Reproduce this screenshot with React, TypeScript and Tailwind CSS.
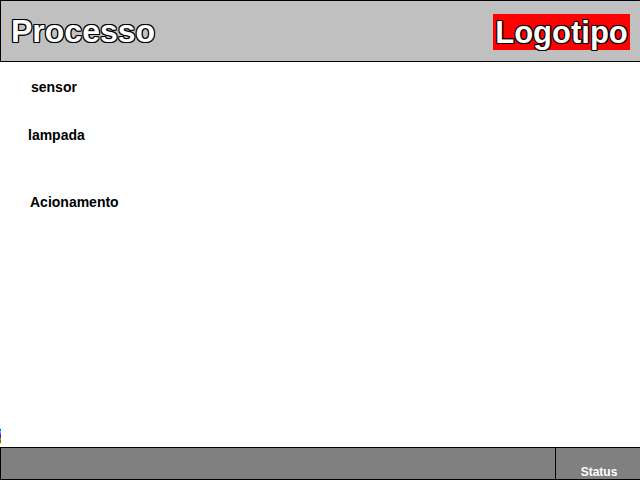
export default function App() {
  return (
    <div className="relative w-[640px] h-[480px] flex flex-col bg-white font-['Liberation_Sans',Arial,sans-serif] overflow-hidden">
      {/* Header */}
      <header className="h-[62px] shrink-0 flex items-center justify-between bg-[#c0c0c0] border-t border-l border-b border-black pl-[10px] pr-[10px]">
        <h1 className="text-[32px] leading-none font-bold text-white [text-shadow:1px_1px_0_#000,-1px_-1px_0_#000,1px_-1px_0_#000,-1px_1px_0_#000,1px_0_0_#000,-1px_0_0_#000,0_1px_0_#000,0_-1px_0_#000]">
          Processo
        </h1>
        <div className="h-[36px] w-[137px] mt-[2px] flex items-center justify-center bg-[#ff0000]">
          <span className="text-[31px] leading-none font-bold text-white [text-shadow:1px_1px_0_#000,-1px_-1px_0_#000,1px_-1px_0_#000,-1px_1px_0_#000,1px_0_0_#000,-1px_0_0_#000,0_1px_0_#000,0_-1px_0_#000]">
            Logotipo
          </span>
        </div>
      </header>

      {/* Body */}
      <main className="grow flex flex-col text-[14px] leading-4 font-bold text-black">
        <div className="mt-[17px] ml-[31px]">sensor</div>
        <div className="mt-[32px] ml-[28px]">lampada</div>
        <div className="mt-[51px] ml-[30px]">Acionamento</div>
      </main>

      {/* stray colour pixels at left edge */}
      <div className="absolute left-0 top-[429px] w-px h-[15px] bg-[linear-gradient(#0000ff,#00ffff,#ff00ff,#0000ff,#00ff00,#ff0000,#ffff00)]" />

      {/* Footer */}
      <footer className="h-[33px] shrink-0 flex bg-[#808080] border-t border-l border-b border-black">
        <div className="w-[555px] border-r border-black" />
        <div className="grow flex items-end justify-center pl-[2px]">
          <span className="text-[12px] leading-[13px] font-bold text-white">Status</span>
        </div>
      </footer>
    </div>
  );
}
